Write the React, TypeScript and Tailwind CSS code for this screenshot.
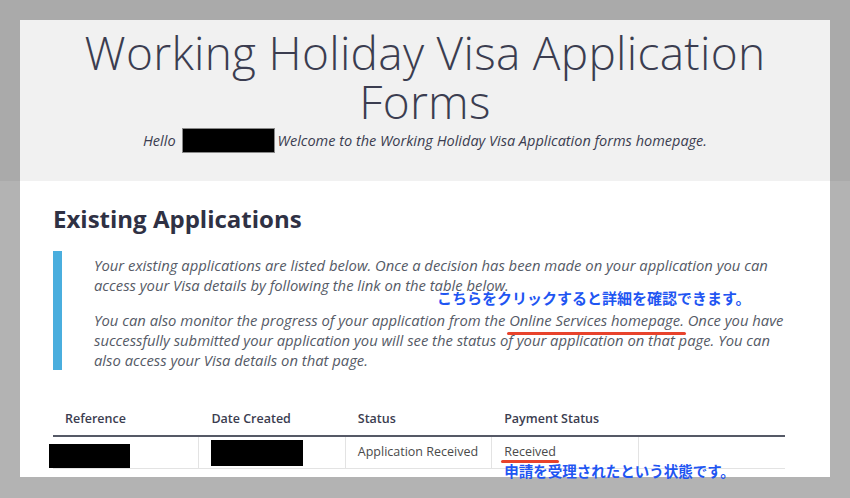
const sans = "font-['Open_Sans','Noto_Sans',sans-serif]";
const jp = "font-['Noto_Sans_CJK_JP',sans-serif]";

// ── Header ────────────────────────────────────────────────────────────────────

function Header() {
  return (
    <div className="bg-[#aaaaaa] px-[20px] pt-[20px]">
      <div className="h-[161px] bg-[#f1f1f1] pt-[8px] text-center">
        <h1 className={`${sans} text-[46px] font-light leading-[49px] tracking-[0.3px] text-[#3b3d50]`}>
          Working Holiday Visa Application
          <br />
          Forms
        </h1>
        <p className={`${sans} mt-[2px] flex items-center justify-center text-[14.5px] italic text-[#3b3d50]`}>
          <span>Hello</span>
          <span className="ml-[6px] mr-[3px] inline-block h-[25px] w-[93px] border border-[#888] bg-black" />
          <span>Welcome to the Working Holiday Visa Application forms homepage.</span>
        </p>
      </div>
    </div>
  );
}

// ── Table ─────────────────────────────────────────────────────────────────────

function AppTable() {
  const heads = ['Reference', 'Date Created', 'Status', 'Payment Status', ''];
  return (
    <div className={`${sans} mt-[34px] w-[732px]`}>
      <div className="grid h-[33px] grid-cols-5 items-center border-b-2 border-[#555966]">
        {heads.map((h, i) => (
          <div key={i} className="px-[12px] text-[12.5px] font-semibold text-[#3b3d50]">{h}</div>
        ))}
      </div>
      <div className="grid h-[32px] grid-cols-5 border-b border-[#e3e3e3] text-[12.5px] text-[#4a4a4a]">
        <div className="relative border-r border-[#e3e3e3]">
          <span className="absolute left-[-4px] top-[7px] h-[24px] w-[81px] bg-black" />
        </div>
        <div className="relative border-r border-[#e3e3e3]">
          <span className="absolute left-[12px] top-[3px] h-[26px] w-[92px] bg-black" />
        </div>
        <div className="flex items-center border-r border-[#e3e3e3] px-[12px]">Application Received</div>
        <div className="relative flex items-center border-r border-[#e3e3e3] px-[12px]">
          Received
          <span className="absolute left-[9px] top-[23px] h-[3px] w-[58px] rounded-full bg-[#e8432c]" />
          <span className={`${jp} absolute left-[12px] top-[25px] whitespace-nowrap text-[14.5px] font-bold leading-[18px] text-[#1f56f2]`}>
            申請を受理されたという状態です。
          </span>
        </div>
        <div />
      </div>
    </div>
  );
}

// ── Page ──────────────────────────────────────────────────────────────────────

export default function App() {
  return (
    <div className="h-[498px] w-[850px] overflow-hidden bg-[#b3b3b3]">
      <Header />
      <div className="px-[20px]">
        <div className="h-[296px] bg-white pl-[33px] pt-[22px]">
          <h2 className={`${sans} text-[24px] font-bold leading-[32px] text-[#2f3144]`}>
            Existing Applications
          </h2>
          <div className={`${sans} relative mt-[16px] w-[732px] border-l-[9px] border-[#4aaede] pl-[32px] text-[14.8px] italic leading-[20px] text-[#555a66]`}>
            <p className="pt-[4px]">
              Your existing applications are listed below. Once a decision has been made on your application you can
              access your Visa details by following the link on the table below.
            </p>
            <p className="mt-[15px]">
              You can also monitor the progress of your application from the{' '}
              <span className="relative">
                Online Services homepage.
                <span className="absolute bottom-[-5px] left-[-2px] right-[-2px] h-[3px] rounded-full bg-[#e8432c]" />
              </span>{' '}
              Once you have successfully submitted your application you will see the status of your application on that page. You can
              also access your Visa details on that page.
            </p>
            <span className={`${jp} absolute left-[375px] top-[38px] whitespace-nowrap text-[15px] font-bold not-italic leading-[18px] text-[#1f56f2]`}>
              こちらをクリックすると詳細を確認できます。
            </span>
          </div>
          <AppTable />
        </div>
      </div>
    </div>
  );
}
